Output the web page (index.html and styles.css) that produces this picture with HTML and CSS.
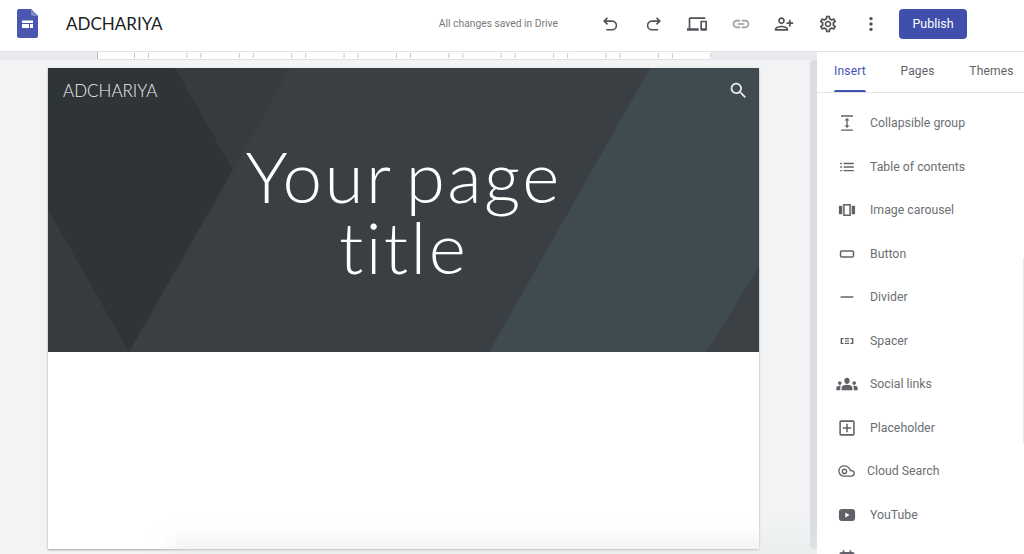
FILE: index.html
```html
<!DOCTYPE html>
<html lang="en">
<head>
<meta charset="utf-8">
<title>ADCHARIYA</title>
<link rel="stylesheet" href="styles.css">
</head>
<body>
<div class="app">
  <header class="topbar">
    <svg class="logo" viewBox="0 0 21 29"><path class="logo-body" d="M2 0h12l7 7v20a2 2 0 0 1-2 2H2a2 2 0 0 1-2-2V2a2 2 0 0 1 2-2z"/><path class="logo-fold" d="M14 0l7 7h-5a2 2 0 0 1-2-2z"/><path class="logo-mark" d="M5 11.500h11v2.500H5zM5 15h7v4H5zM13 15h3v4h-3z"/></svg>
    <div class="doc-title">ADCHARIYA</div>
    <div class="status">All changes saved in Drive</div>
    <div class="tools">
      <svg class="tool" viewBox="0 0 24 24"><path class="line" d="M9 4.500 5 8.500l4 4M5 8.500h9.500a5.200 5.200 0 0 1 0 10.400H7.500"/></svg>
      <svg class="tool" viewBox="0 0 24 24"><path class="line" d="m15 4.500 4 4-4 4M19 8.500H9.500a5.200 5.200 0 0 0 0 10.400H17"/></svg>
      <svg class="tool" viewBox="0 0 24 24"><path d="M4 6h18V4H4c-1.100 0-2 .9-2 2v11H0v3h14v-3H4V6zm19 2h-6c-.55 0-1 .45-1 1v10c0 .55.45 1 1 1h6c.55 0 1-.45 1-1V9c0-.55-.45-1-1-1zm-1 9h-4v-7h4v7z"/></svg>
      <svg class="tool tool-muted" viewBox="0 0 24 24"><path d="M3.900 12c0-1.710 1.390-3.100 3.100-3.100h4V7H7c-2.760 0-5 2.240-5 5s2.240 5 5 5h4v-1.900H7c-1.710 0-3.100-1.390-3.100-3.100zM8 13h8v-2H8v2zm9-6h-4v1.900h4c1.710 0 3.100 1.390 3.100 3.100s-1.390 3.100-3.100 3.100h-4V17h4c2.760 0 5-2.240 5-5s-2.240-5-5-5z"/></svg>
      <svg class="tool" viewBox="0 0 24 24"><path transform="matrix(-1 0 0 1 24 0)" d="M15 12c2.210 0 4-1.790 4-4s-1.790-4-4-4-4 1.790-4 4 1.790 4 4 4zm0-6c1.100 0 2 .9 2 2s-.9 2-2 2-2-.9-2-2 .9-2 2-2zm0 8c-2.670 0-8 1.340-8 4v2h16v-2c0-2.660-5.330-4-8-4zm-6 4c.22-.72 3.310-2 6-2 2.700 0 5.800 1.290 6 2H9zm-3-3v-3h3v-2H6V7H4v3H1v2h3v3h2z"/></svg>
      <svg class="tool" viewBox="0 0 24 24"><path d="M19.430 12.980c.04-.32.07-.64.07-.98 0-.34-.03-.66-.07-.98l2.110-1.650c.19-.15.24-.42.12-.64l-2-3.460c-.09-.16-.26-.25-.44-.25-.06 0-.12.01-.17.03l-2.490 1c-.52-.4-1.080-.73-1.690-.98l-.38-2.650C14.460 2.180 14.250 2 14 2h-4c-.25 0-.46.18-.49.42l-.38 2.650c-.61.25-1.170.59-1.690.98l-2.490-1c-.06-.02-.12-.03-.18-.03-.17 0-.34.09-.43.25l-2 3.460c-.13.22-.07.49.12.64l2.110 1.650c-.04.32-.07.65-.07.98 0 .33.03.66.07.98l-2.110 1.650c-.19.15-.24.42-.12.64l2 3.460c.09.16.26.25.44.25.06 0 .12-.01.17-.03l2.490-1c.52.4 1.080.73 1.690.98l.38 2.650c.03.24.24.42.49.42h4c.25 0 .46-.18.49-.42l.38-2.650c.61-.25 1.170-.59 1.690-.98l2.490 1c.06.02.12.03.18.03.17 0 .34-.09.43-.25l2-3.460c.12-.22.07-.49-.12-.64l-2.110-1.650zm-1.980-1.710c.04.31.05.52.05.73 0 .21-.02.43-.05.73l-.14 1.130.89.7 1.080.84-.7 1.210-1.270-.51-1.040-.42-.9.68c-.43.32-.84.56-1.250.73l-1.060.43-.16 1.130-.2 1.350h-1.400l-.19-1.350-.16-1.130-1.060-.43c-.43-.18-.83-.41-1.230-.71l-.91-.7-1.060.43-1.270.51-.7-1.210 1.080-.84.89-.7-.14-1.130c-.03-.31-.05-.54-.05-.74s.02-.43.05-.73l.14-1.130-.89-.7-1.080-.84.7-1.210 1.270.51 1.040.42.9-.68c.43-.32.84-.56 1.250-.73l1.060-.43.16-1.130.2-1.350h1.390l.19 1.350.16 1.130 1.060.43c.43.18.83.41 1.230.71l.91.7 1.060-.43 1.270-.51.7 1.210-1.070.85-.89.7.14 1.130zM12 8c-2.210 0-4 1.790-4 4s1.790 4 4 4 4-1.790 4-4-1.790-4-4-4zm0 6c-1.100 0-2-.9-2-2s.9-2 2-2 2 .9 2 2-.9 2-2 2z"/></svg>
      <svg class="tool" viewBox="0 0 24 24"><circle cx="12" cy="5.500" r="2"/><circle cx="12" cy="12" r="2"/><circle cx="12" cy="18.500" r="2"/></svg>
    </div>
    <button class="publish">Publish</button>
  </header>

  <div class="workspace">
    <main class="editor">
      <div class="ruler-track"><div class="ruler"></div></div>
      <div class="stage">
        <div class="canvas">
          <article class="page">
            <section class="hero">
              <svg class="hero-art" viewBox="0 0 711 284" preserveAspectRatio="none">
                <polygon class="art-band" points="127,0 242,0 185,102"/>
                <polygon class="art-dark" points="0,0 127,0 185,102 81,284 0,142"/>
                <polygon class="art-low" points="0,142 81,284 0,284"/>
                <polygon class="art-right" points="602,0 711,0 711,199 659,284 441,284"/>
                <polygon class="art-corner" points="711,199 711,284 659,284"/>
              </svg>
              <div class="hero-bar">
                <div class="site-name">ADCHARIYA</div>
                <svg class="hero-search" viewBox="0 0 24 24"><path d="M15.500 14h-.79l-.28-.27C15.410 12.590 16 11.110 16 9.500 16 5.910 13.090 3 9.500 3S3 5.910 3 9.500 5.910 16 9.500 16c1.610 0 3.090-.59 4.230-1.570l.27.28v.79l5 4.990L20.490 19l-4.990-5zm-6 0C7.010 14 5 11.990 5 9.500S7.010 5 9.500 5 14 7.010 14 9.500 11.990 14 9.500 14z"/></svg>
              </div>
              <h1 class="hero-title">Your page<br>title</h1>
            </section>
            <div class="page-body"></div>
          </article>
        </div>
        <div class="gutter"></div>
      </div>
    </main>

    <aside class="panel">
      <nav class="tabs">
        <div class="tab tab-active">Insert</div>
        <div class="tab">Pages</div>
        <div class="tab">Themes</div>
      </nav>
      <ul class="items">
        <li class="item"><svg class="ico" viewBox="0 0 24 24"><path d="M5 3h14v1.500H5zM5 19.500h14V21H5zM12 6l3 3.200h-2.200v5.600H15L12 18l-3-3.200h2.200V9.200H9z"/></svg><span>Collapsible group</span></li>
        <li class="item"><svg class="ico" viewBox="0 0 24 24"><path d="M8 7h12v1.700H8zM8 11.200h12v1.700H8zM8 15.400h12v1.700H8zM4 7h2v1.700H4zM4 11.200h2v1.700H4zM4 15.400h2v1.700H4z"/></svg><span>Table of contents</span></li>
        <li class="item"><svg class="ico" viewBox="0 0 24 24"><path d="M2.500 7H6.500v10H2.500zM17.500 7h4v10h-4z"/><path fill-rule="evenodd" d="M7.500 5h9v14h-9zm1.800 1.800v10.400h5.400V6.800z"/></svg><span>Image carousel</span></li>
        <li class="item"><svg class="ico" viewBox="0 0 24 24"><path fill-rule="evenodd" d="M6 7.500h12a2.500 2.500 0 0 1 2.500 2.500v4a2.500 2.500 0 0 1-2.500 2.500H6A2.500 2.500 0 0 1 3.500 14v-4A2.500 2.500 0 0 1 6 7.500zm0 1.800a.7.7 0 0 0-.7.7v4c0 .4.3.7.7.7h12c.4 0 .7-.3.7-.7v-4a.7.7 0 0 0-.7-.7z"/></svg><span>Button</span></li>
        <li class="item"><svg class="ico" viewBox="0 0 24 24"><path d="M4.500 11h15v1.800h-15z"/></svg><span>Divider</span></li>
        <li class="item"><svg class="ico" viewBox="0 0 24 24"><path d="M4.500 8.500H8V10H6.200v4H8v1.500H4.500zM19.500 8.500H16V10h1.800v4H16v1.500h3.500zM9.500 8.500h5V10h-5zM9.500 14h5v1.500h-5zM9.500 11.300h5v1.400h-5z"/></svg><span>Spacer</span></li>
        <li class="item"><svg class="ico ico-wide" viewBox="0 0 24 24"><path d="M12 12.750c1.630 0 3.070.39 4.240.9 1.080.48 1.760 1.560 1.760 2.730V19H6v-2.610c0-1.180.68-2.260 1.760-2.730 1.170-.52 2.610-.91 4.240-.91zM4 13c1.100 0 2-.9 2-2s-.9-2-2-2-2 .9-2 2 .9 2 2 2zm1.130 1.100C4.760 14.040 4.390 14 4 14c-.99 0-1.930.21-2.780.58C.48 14.900 0 15.620 0 16.430V19h4.500v-2.610c0-.83.23-1.610.63-2.290zM20 13c1.100 0 2-.9 2-2s-.9-2-2-2-2 .9-2 2 .9 2 2 2zm4 3.430c0-.81-.48-1.530-1.220-1.850-.85-.37-1.790-.58-2.780-.58-.39 0-.76.04-1.130.1.4.68.63 1.460.63 2.290V19H24v-2.570zM12 5c1.660 0 3 1.340 3 3.500S13.660 12 12 12s-3-1.340-3-3.500S10.340 5 12 5z"/></svg><span>Social links</span></li>
        <li class="item"><svg class="ico" viewBox="0 0 24 24"><path fill-rule="evenodd" d="M5 3h14a2 2 0 0 1 2 2v14a2 2 0 0 1-2 2H5a2 2 0 0 1-2-2V5a2 2 0 0 1 2-2zm0 1.800a.2.2 0 0 0-.2.2v14c0 .1.1.2.2.2h14a.2.2 0 0 0 .2-.2V5a.2.2 0 0 0-.2-.2z"/><path d="M11.100 7h1.800v4.100H17v1.800h-4.100V17h-1.800v-4.100H7v-1.800h4.100z"/></svg><span>Placeholder</span></li>
        <li class="item item-tight"><svg class="ico" viewBox="0 0 24 24"><path class="line-thin" d="M9.500 6a6 6 0 0 1 5 2.800 4 4 0 0 1 1.500 2.700h1.200a3 3 0 0 1 0 6.500H7.500A6 6 0 0 1 9.500 6z"/><circle class="line-thin" cx="9" cy="12.500" r="2.500"/></svg><span>Cloud Search</span></li>
        <li class="item"><svg class="ico" viewBox="0 0 24 24"><path fill-rule="evenodd" d="M6 5h12a3.500 3.500 0 0 1 3.500 3.500v7A3.500 3.500 0 0 1 18 19H6a3.500 3.500 0 0 1-3.500-3.500v-7A3.500 3.500 0 0 1 6 5zm4 4v6l5-3z"/></svg><span>YouTube</span></li>
        <li class="item"><svg class="ico" viewBox="0 0 24 24"><path d="M7 3h2v2h6V3h2v2h1.500A2.500 2.500 0 0 1 21 7.500V19a2 2 0 0 1-2 2H5a2 2 0 0 1-2-2V7.500A2.500 2.500 0 0 1 5.500 5H7z"/></svg><span></span></li>
      </ul>
      <div class="scroll-thumb"></div>
    </aside>
  </div>
  <div class="bottom-fade"></div>
</div>
</body>
</html>
```
FILE: styles.css
```css
* { box-sizing: border-box; }
html, body { margin: 0; padding: 0; }
body { font-family: Roboto, "Liberation Sans", sans-serif; background: #fff; }
.app { position: relative; width: 1024px; height: 554px; overflow: hidden; display: flex; flex-direction: column; }

.topbar { height: 52px; flex: none; display: flex; align-items: center; padding: 0 57px 4px 17px; border-bottom: 1px solid #e3e4e6; background: #fff; }
.logo { width: 21px; height: 29px; flex: none; }
.logo-body { fill: #4a56b0; }
.logo-fold { fill: #8088cc; }
.logo-mark { fill: #fff; }
.doc-title { margin-left: 28px; font-family: Lato, "Open Sans", sans-serif; font-size: 17px; color: #202124; }
.status { margin-left: auto; font-size: 10.300px; color: #777a7e; white-space: nowrap; }
.tools { display: flex; gap: 23.500px; margin-left: 42px; }
.tool { width: 20px; height: 20px; flex: none; fill: #4f5256; }
.tool-muted { fill: #9a9da1; }
.line { fill: none; stroke: #4f5256; stroke-width: 1.900; }
.publish { margin-left: 18px; width: 68px; height: 30px; border: 0; border-radius: 4px; background: #3f4fab; color: #fff; font: 400 12.500px Roboto, sans-serif; padding: 0; }

.workspace { flex: 1; display: flex; min-height: 0; }
.editor { width: 817px; flex: none; display: flex; flex-direction: column; background: #f1f3f4; }
.ruler-track { height: 8px; flex: none; background: #e8eaed; padding-left: 97px; }
.ruler { width: 614px; height: 8px; border-bottom: 1px solid #dfe1e4;
  background-color: #fff;
  background-image: linear-gradient(90deg, #b9bbbe 1px, transparent 1px), linear-gradient(90deg, #c4c6c9 1px, transparent 1px), linear-gradient(90deg, #c4c6c9 1px, transparent 1px);
  background-repeat: no-repeat, repeat-x, repeat-x;
  background-position: 0 0, 37px 1px, 51px 1px;
  background-size: 2px 100%, 52.400px 5px, 52.400px 5px;
}
.stage { flex: 1; display: flex; min-height: 0; }
.canvas { width: 810px; flex: none; padding: 8px 0 0 48px; }
.gutter { width: 7px; height: 489px; background: #dadce0; border-radius: 4px 0 0 4px; }
.page { width: 711px; box-shadow: 0 1px 2px rgba(60,64,67,.45); background: #fff; }

.hero { position: relative; height: 284px; background: #3a3f44; color: #fff; overflow: hidden; }
.hero-art { position: absolute; inset: 0; width: 100%; height: 100%; }
.art-band { fill: #373b3f; }
.art-dark { fill: #2f3437; }
.art-low { fill: #373a3e; }
.art-right { fill: #404a51; }
.art-corner { fill: #3b4145; }
.hero-bar { position: relative; display: flex; justify-content: space-between; align-items: center; padding: 9px 10px 0 15px; height: 36px; }
.site-name { font-family: Lato, "Open Sans", sans-serif; font-weight: 300; font-size: 17px; color: #eef0f1; }
.hero-search { width: 21px; height: 21px; fill: #e8eaec; }
.hero-title { position: relative; margin: 36px 0 0; text-align: center; font-family: Lato, "Open Sans", sans-serif; font-weight: 300; font-size: 71px; line-height: 71px; letter-spacing: 2.400px; word-spacing: -8px; font-variant-ligatures: none; color: #fff; }
.page-body { height: 197px; background: #fff; }

.panel { position: relative; z-index: 1; flex: 1; background: #fff; overflow: hidden; }
.tabs { height: 41px; display: flex; gap: 34.500px; padding-left: 17px; border-bottom: 1px solid #e3e4e6; }
.tab { position: relative; padding-top: 12px; font-size: 12px; letter-spacing: .2px; color: #5f6368; white-space: nowrap; }
.tab-active { color: #3f51b5; }
.tab-active::after { content: ""; position: absolute; left: 0; right: 0; bottom: 0; height: 2px; background: #3f4fab; border-radius: 2px 2px 0 0; }
.items { list-style: none; margin: 8.500px 0 0; padding: 0; }
.item { height: 43.500px; display: flex; align-items: center; gap: 11px; padding-left: 18px; font-size: 12.300px; color: #6b6f73; }
.item-tight { gap: 8px; }
.ico { width: 24px; height: 24px; flex: none; fill: #5f6368; transform: scale(.85); }
.ico-wide { transform: scale(.9); }
.line-thin { fill: none; stroke: #5f6368; stroke-width: 1.600; }
.scroll-thumb { position: absolute; right: 0; top: 206px; width: 1px; height: 185px; background: #e6e7e9; }

.bottom-fade { position: absolute; left: 170px; right: 130px; bottom: -10px; height: 26px; background: rgba(232,233,234,.55); filter: blur(9px); pointer-events: none; }
```
